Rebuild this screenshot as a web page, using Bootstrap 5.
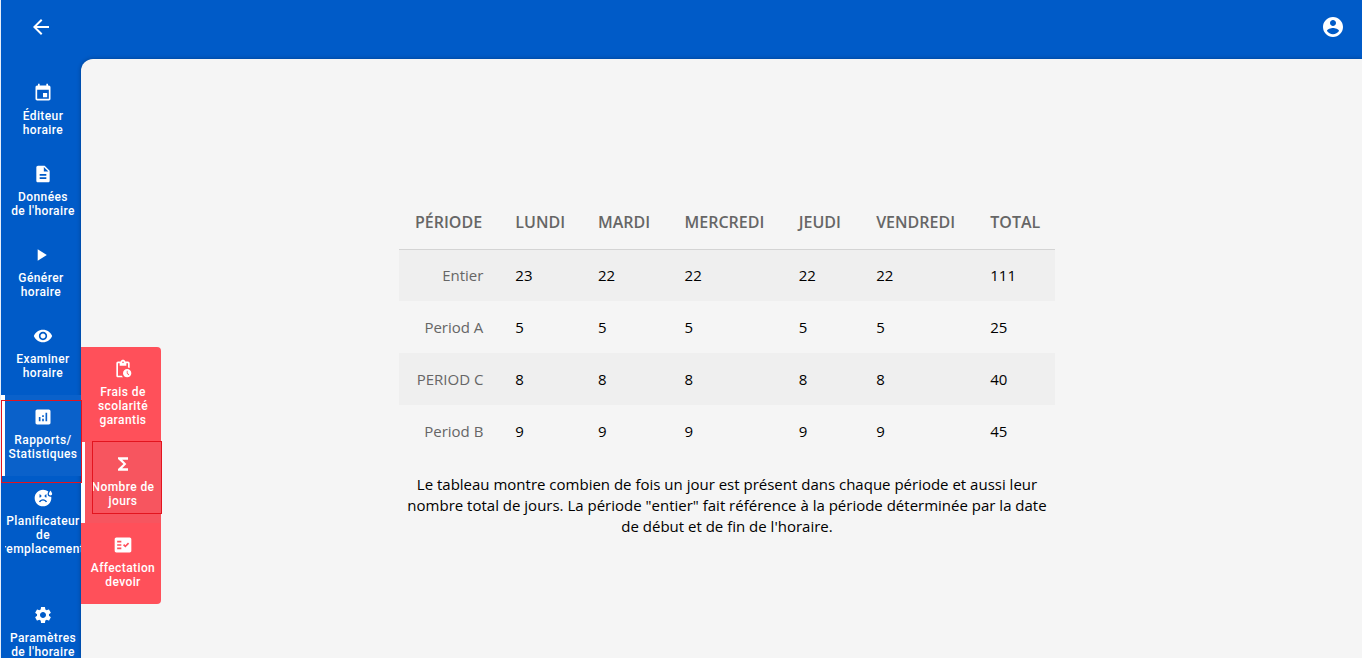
<!DOCTYPE html>
<html lang="fr">
<head>
<meta charset="utf-8">
<meta name="viewport" content="width=device-width, initial-scale=1">
<title>Nombre de jours</title>
<link rel="stylesheet" href="https://cdn.jsdelivr.net/npm/bootstrap@5.3.0/dist/css/bootstrap.min.css">
<style>
  :root { --brand: #005bc8; --surface: #f5f5f5; --accent: #ff505a; }
  body { font-family: "Segoe UI", "Open Sans", sans-serif; font-size: 15px; line-height: 21px; color: #000; background: var(--brand); }
  svg { fill: currentColor; display: block; }
  .app { border-left: 1px solid #e6eefa; height: 100vh; overflow: hidden; }
  .topbar { height: 59px; padding: 0 17px 5px 28px; }
  .icon-btn { color: #fff; padding: 0; border: 0; background: none; }
  .page-body { min-height: 0; }
  .rail { width: 80px; padding-top: 12px; }
  .rail-link { position: relative; color: #fff; text-decoration: none; text-align: center; font: 500 12px/14px Roboto, sans-serif; letter-spacing: .4px; padding: 12px 0 15px 4px; min-height: 81px; display: flex; flex-direction: column; align-items: center; }
  .rail-link svg { width: 20px; height: 20px; margin-bottom: 6px; flex: none; }
  .rail-link > span { align-self: stretch; }
  .rail-link:hover { color: #fff; }
  .rail-link.is-current { background: #0a61ca; }
  .submenu .is-current { background: #f7555f; }
  .is-current::before { content: ""; position: absolute; left: 0; top: 0; bottom: 0; width: 4px; background: #fff; }
  .label-clip { overflow: hidden; display: flex; flex-direction: column; align-items: center; }
  .submenu { position: absolute; left: 80px; top: -48px; width: 80px; background: var(--accent); border-radius: 0 4px 4px 0; z-index: 2; }
  .submenu .rail-link { padding-left: 8px; padding-right: 4px; }
  .rail-gap { margin-top: 22px; }
  .marker { position: absolute; border: 1px solid #e3141e; z-index: 3; pointer-events: none; }
  .marker-main { left: 0; right: -1px; top: 5px; bottom: -7px; }
  .marker-sub { left: 11px; right: -1px; top: -1px; bottom: 9px; }
  .surface { background: var(--surface); border-top-left-radius: 12px; padding-left: 11px; box-shadow: 0 0 4px rgba(0,0,0,.3); }
  .report { max-width: 656px; padding-top: 17px; }
  .day-table { table-layout: fixed; --bs-table-bg: transparent; --bs-table-striped-bg: #efefef; margin-bottom: 17px; }
  .table.day-table > :not(caption) > tr > * { padding: 0 16px; height: 52px; vertical-align: middle; border: 0; color: #000; }
  .table.day-table > thead > tr > th { font-size: 16px; font-weight: 600; color: #666; text-transform: uppercase; border-bottom: 1px solid #d4d4d4; }
  .table.day-table > tbody > tr > th { font-weight: 400; color: #666; text-align: right; }
</style>
</head>
<body>
<div class="app d-flex flex-column">
  <header class="topbar flex-shrink-0 d-flex align-items-center justify-content-between">
    <button type="button" class="icon-btn" aria-label="Retour"><svg width="24" height="24" viewBox="0 0 24 24"><path d="M20 11H7.830l5.590-5.590L12 4l-8 8 8 8 1.410-1.410L7.830 13H20z"/></svg></button>
    <button type="button" class="icon-btn" aria-label="Compte"><svg width="24" height="24" viewBox="0 0 24 24"><path d="M12 2C6.480 2 2 6.480 2 12s4.480 10 10 10 10-4.480 10-10S17.520 2 12 2zm0 3c1.660 0 3 1.340 3 3s-1.340 3-3 3-3-1.340-3-3 1.340-3 3-3zm0 14.200c-2.500 0-4.710-1.280-6-3.220.030-1.990 4-3.080 6-3.080 1.990 0 5.970 1.090 6 3.080-1.290 1.940-3.500 3.220-6 3.220z"/></svg></button>
  </header>
  <div class="page-body d-flex flex-grow-1">
    <nav class="rail flex-shrink-0 d-flex flex-column position-relative z-1" aria-label="Menu principal">
      <a class="rail-link flex-shrink-0" href="#"><svg viewBox="0 0 24 24"><path d="M17 12h-5v5h5v-5zM16 1v2H8V1H6v2H5c-1.110 0-1.990.9-1.990 2L3 19c0 1.100.890 2 2 2h14c1.100 0 2-.9 2-2V5c0-1.100-.9-2-2-2h-1V1h-2zm3 18H5V8h14v11z"/></svg><span>Éditeur<br>horaire</span></a>
      <a class="rail-link flex-shrink-0" href="#"><svg viewBox="0 0 24 24"><path d="M14 2H6c-1.100 0-1.990.9-1.990 2L4 20c0 1.100.890 2 1.990 2H18c1.100 0 2-.9 2-2V8l-6-6zm2 16H8v-2h8v2zm0-4H8v-2h8v2zm-3-5V3.500L18.500 9H13z"/></svg><span>Données<br>de l'horaire</span></a>
      <a class="rail-link flex-shrink-0 ps-0" href="#"><svg viewBox="0 0 24 24"><path d="M8 5v14l11-7z"/></svg><span>Générer<br>horaire</span></a>
      <a class="rail-link flex-shrink-0" href="#"><svg viewBox="0 0 24 24"><path d="M12 4.500C7 4.500 2.730 7.610 1 12c1.730 4.390 6 7.500 11 7.500s9.270-3.110 11-7.500c-1.730-4.390-6-7.500-11-7.500zM12 17c-2.760 0-5-2.240-5-5s2.240-5 5-5 5 2.240 5 5-2.240 5-5 5zm0-8c-1.660 0-3 1.340-3 3s1.340 3 3 3 3-1.340 3-3-1.340-3-3-3z"/></svg><span>Examiner<br>horaire</span></a>
      <div class="position-relative flex-shrink-0">
        <a class="rail-link is-current" href="#" aria-current="true"><svg viewBox="0 0 24 24"><path d="M19 3H5c-1.100 0-2 .9-2 2v14c0 1.100.9 2 2 2h14c1.100 0 2-.9 2-2V5c0-1.100-.9-2-2-2zM9 17H7v-5h2v5zm4 0h-2v-3h2v3zm0-5h-2v-2h2v2zm4 5h-2V7h2v10z"/></svg><span>Rapports/<br>Statistiques</span></a>
        <div class="submenu">
          <a class="rail-link" href="#"><svg viewBox="0 0 24 24"><path d="M17 12c-2.760 0-5 2.240-5 5s2.240 5 5 5 5-2.240 5-5-2.240-5-5-5zm1.650 7.350L16.500 17.200V14h1v2.790l1.850 1.850-.7.710zM18 3h-3.180C14.400 1.840 13.300 1 12 1s-2.400.840-2.820 2H6c-1.100 0-2 .9-2 2v15c0 1.100.9 2 2 2h6.110c-.590-.570-1.070-1.250-1.420-2H6V5h2v3h8V5h2v5.080c.710.100 1.380.310 2 .6V5c0-1.100-.9-2-2-2zm-6 2c-.550 0-1-.450-1-1s.450-1 1-1 1 .450 1 1-.450 1-1 1z"/></svg><span>Frais de scolarité garantis</span></a>
          <a class="rail-link is-current" href="#" aria-current="page"><svg viewBox="0 0 24 24"><path d="M18 4H6v2l6.500 6L6 18v2h12v-3h-7l5-5-5-5h7z"/></svg><span>Nombre de jours</span><i class="marker marker-sub"></i></a>
          <a class="rail-link" href="#"><svg viewBox="0 0 24 24"><path d="M20 3H4c-1.100 0-2 .9-2 2v14c0 1.100.9 2 2 2h16c1.100 0 2-.9 2-2V5c0-1.100-.9-2-2-2zM10 17H5v-2h5v2zm0-4H5v-2h5v2zm0-4H5V7h5v2zm4.820 6L12 12.160l1.410-1.410 1.410 1.420L17.990 9l1.420 1.420L14.820 15z"/></svg><span>Affectation devoir</span></a>
        </div>
        <i class="marker marker-main"></i>
      </div>
      <a class="rail-link flex-shrink-0" href="#"><svg viewBox="0 0 24 24"><path fill-rule="evenodd" d="M21 9c-1.100 0-2-.9-2-2s2-4 2-4 2 2.900 2 4-.9 2-2 2zM17.500 7c0-.73.410-1.710.920-2.660A9.960 9.960 0 0 0 12 2C6.470 2 2 6.480 2 12s4.470 10 10 10 10-4.480 10-10c0-.550-.060-1.090-.140-1.620-.280.070-.560.120-.860.120A3.500 3.500 0 0 1 17.500 7zM15.620 7.380l1.060 1.060-1.060 1.060 1.060 1.060-1.060 1.060L13.500 9.500zM7.320 8.440l1.060-1.060L10.500 9.500l-2.120 2.120-1.060-1.060L8.380 9.500zM15.440 17a3.980 3.980 0 0 0-6.880 0l-1.500-.5c.97-1.790 2.800-3 4.940-3s3.970 1.210 4.940 3z"/></svg><span class="label-clip"><span>Planificateur</span><span>de</span><span>remplacement</span></span></a>
      <a class="rail-link flex-shrink-0 rail-gap" href="#"><svg viewBox="0 0 24 24"><path d="M19.140 12.940c.040-.3.060-.610.060-.940 0-.320-.020-.640-.070-.940l2.030-1.580c.180-.140.230-.410.120-.610l-1.920-3.320c-.120-.220-.370-.290-.590-.220l-2.390.960c-.5-.380-1.030-.7-1.620-.940l-.360-2.540c-.040-.240-.240-.410-.480-.410h-3.840c-.240 0-.430.170-.470.410l-.360 2.540c-.590.240-1.130.570-1.620.940l-2.390-.960c-.220-.080-.470 0-.590.220L2.740 8.870c-.120.210-.080.470.120.610l2.030 1.580c-.050.3-.090.630-.090.940s.020.640.070.940l-2.030 1.580c-.180.140-.230.410-.120.610l1.920 3.320c.120.220.370.290.590.220l2.390-.960c.5.380 1.030.7 1.620.940l.360 2.540c.050.240.240.410.480.410h3.840c.240 0 .440-.170.470-.410l.360-2.540c.590-.240 1.130-.560 1.620-.940l2.390.960c.220.080.470 0 .590-.220l1.920-3.320c.120-.220.070-.470-.120-.610zM12 15.600c-1.980 0-3.600-1.620-3.600-3.600s1.620-3.600 3.600-3.600 3.600 1.620 3.600 3.600-1.620 3.600-3.600 3.600z"/></svg><span>Paramètres<br>de l'horaire</span></a>
    </nav>
    <main class="surface flex-grow-1 d-flex align-items-center justify-content-center">
      <div class="report w-100">
        <table class="table table-striped day-table">
          <colgroup><col style="width:15.3%"><col style="width:12.6%"><col style="width:13.2%"><col style="width:17.4%"><col style="width:11.8%"><col style="width:17.4%"><col style="width:12.3%"></colgroup>
          <thead><tr><th scope="col">Période</th><th scope="col">Lundi</th><th scope="col">Mardi</th><th scope="col">Mercredi</th><th scope="col">Jeudi</th><th scope="col">Vendredi</th><th scope="col">Total</th></tr></thead>
          <tbody>
            <tr><th scope="row">Entier</th><td>23</td><td>22</td><td>22</td><td>22</td><td>22</td><td>111</td></tr>
            <tr><th scope="row">Period A</th><td>5</td><td>5</td><td>5</td><td>5</td><td>5</td><td>25</td></tr>
            <tr><th scope="row">PERIOD C</th><td>8</td><td>8</td><td>8</td><td>8</td><td>8</td><td>40</td></tr>
            <tr><th scope="row">Period B</th><td>9</td><td>9</td><td>9</td><td>9</td><td>9</td><td>45</td></tr>
          </tbody>
        </table>
        <p class="text-center mb-0">Le tableau montre combien de fois un jour est présent dans chaque période et aussi leur nombre total de jours. La période "entier" fait référence à la période déterminée par la date de début et de fin de l'horaire.</p>
      </div>
    </main>
  </div>
</div>
<script src="https://cdn.jsdelivr.net/npm/bootstrap@5.3.0/dist/js/bootstrap.bundle.min.js"></script>
</body>
</html>
